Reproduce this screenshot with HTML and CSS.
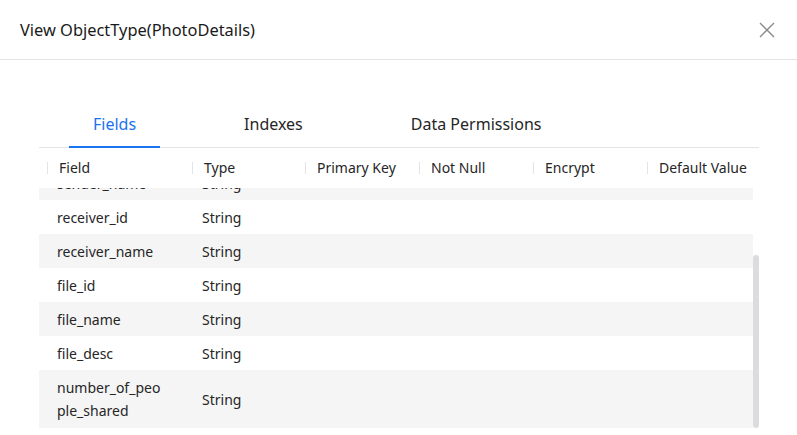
FILE: index.html
```html
<!DOCTYPE html>
<html>
<head>
<meta charset="utf-8">
<link rel="stylesheet" href="styles.css">
</head>
<body>
<div class="dialog">
  <header class="dlg-head">
    <h1 class="dlg-title">View ObjectType(PhotoDetails)</h1>
    <button class="close" aria-label="Close">
      <svg width="16" height="16" viewBox="0 0 16 16"><path d="M1 1 L15 15 M15 1 L1 15" stroke="#8a8a8a" stroke-width="1.4" fill="none"/></svg>
    </button>
  </header>
  <div class="dlg-body">
    <nav class="tabs">
      <div class="tab active">Fields</div>
      <div class="tab">Indexes</div>
      <div class="tab">Data Permissions</div>
    </nav>
    <div class="table">
      <div class="thead">
        <div class="th c1">Field</div>
        <div class="th c2">Type</div>
        <div class="th c3">Primary Key</div>
        <div class="th c4">Not Null</div>
        <div class="th c5">Encrypt</div>
        <div class="th c6">Default Value</div>
      </div>
      <div class="tbody-wrap">
        <div class="tbody">
          <div class="tr odd first"><div class="td c1">sender_name</div><div class="td c2">String</div><div class="td c3"></div><div class="td c4"></div><div class="td c5"></div><div class="td c6"></div></div>
          <div class="tr"><div class="td c1">receiver_id</div><div class="td c2">String</div><div class="td c3"></div><div class="td c4"></div><div class="td c5"></div><div class="td c6"></div></div>
          <div class="tr odd"><div class="td c1">receiver_name</div><div class="td c2">String</div><div class="td c3"></div><div class="td c4"></div><div class="td c5"></div><div class="td c6"></div></div>
          <div class="tr"><div class="td c1">file_id</div><div class="td c2">String</div><div class="td c3"></div><div class="td c4"></div><div class="td c5"></div><div class="td c6"></div></div>
          <div class="tr odd"><div class="td c1">file_name</div><div class="td c2">String</div><div class="td c3"></div><div class="td c4"></div><div class="td c5"></div><div class="td c6"></div></div>
          <div class="tr"><div class="td c1">file_desc</div><div class="td c2">String</div><div class="td c3"></div><div class="td c4"></div><div class="td c5"></div><div class="td c6"></div></div>
          <div class="tr odd tall"><div class="td c1 wrap">number_of_people_shared</div><div class="td c2">String</div><div class="td c3"></div><div class="td c4"></div><div class="td c5"></div><div class="td c6"></div></div>
        </div>
        <div class="scroll-track"><div class="scroll-thumb"></div></div>
      </div>
    </div>
  </div>
</div>
</body>
</html>
```
FILE: styles.css
```css
* { box-sizing: border-box; }
html, body { margin: 0; padding: 0; background: #fff; }
body {
  font-family: "Noto Sans", "Open Sans", sans-serif;
  color: #1a1a1a;
  width: 797px;
  height: 435px;
  overflow: hidden;
}
.dialog { width: 797px; }
.dlg-head {
  height: 60px;
  border-bottom: 1px solid #e3e3e3;
  display: flex;
  align-items: center;
  justify-content: space-between;
  padding: 0 22px 0 20px;
}
.dlg-title {
  margin: 0;
  font-size: 16.4px;
  font-weight: 400;
  color: #1a1a1a;
}
.close {
  border: 0;
  background: none;
  padding: 0;
  width: 16px;
  height: 16px;
  display: flex;
}
.dlg-body { padding: 43px 38px 0 39px; }
.tabs {
  display: flex;
  gap: 60px;
  padding-left: 30px;
  border-bottom: 1px solid #e3e3e3;
  width: 720px;
}
.tab {
  position: relative;
  padding: 10px 24px 13px;
  line-height: 22px;
  font-size: 16px;
  color: #262626;
  margin-bottom: -1px;
}
.tab.active { color: #1a73f0; }
.tab.active::after {
  content: "";
  position: absolute;
  left: 0; right: 0; bottom: 0;
  height: 2px;
  background: #1a73f0;
}
.table { width: 720px; font-size: 14px; }
.thead {
  display: flex;
  height: 40px;
  align-items: center;
}
.th {
  position: relative;
  padding-left: 20px;
  color: #262626;
  line-height: 20px;
}
.th::before {
  content: "";
  position: absolute;
  left: 8px;
  top: 4px;
  width: 1px;
  height: 12px;
  background: #e3e3e3;
}
.c1 { width: 145px; flex: none; }
.c2 { width: 113px; flex: none; }
.c3, .c4, .c5, .c6 { width: 114px; flex: none; }
.tbody-wrap {
  display: flex;
  height: 240px;
  overflow: hidden;
}
.tbody { width: 714px; flex: none; }
.tr {
  display: flex;
  align-items: center;
  height: 34px;
}
.tr.odd { background: #f5f5f5; }
.tr.first { margin-top: -22px; }
.tr.tall { height: 58px; }
.td {
  padding-left: 18px;
  line-height: 23px;
  color: #262626;
}
.td.wrap { word-break: break-all; padding-right: 20px; }
.scroll-track { width: 6px; flex: none; }
.scroll-thumb {
  margin-top: 67px;
  height: 173px;
  width: 6px;
  border-radius: 3px;
  background: #dcdcdf;
}
```
